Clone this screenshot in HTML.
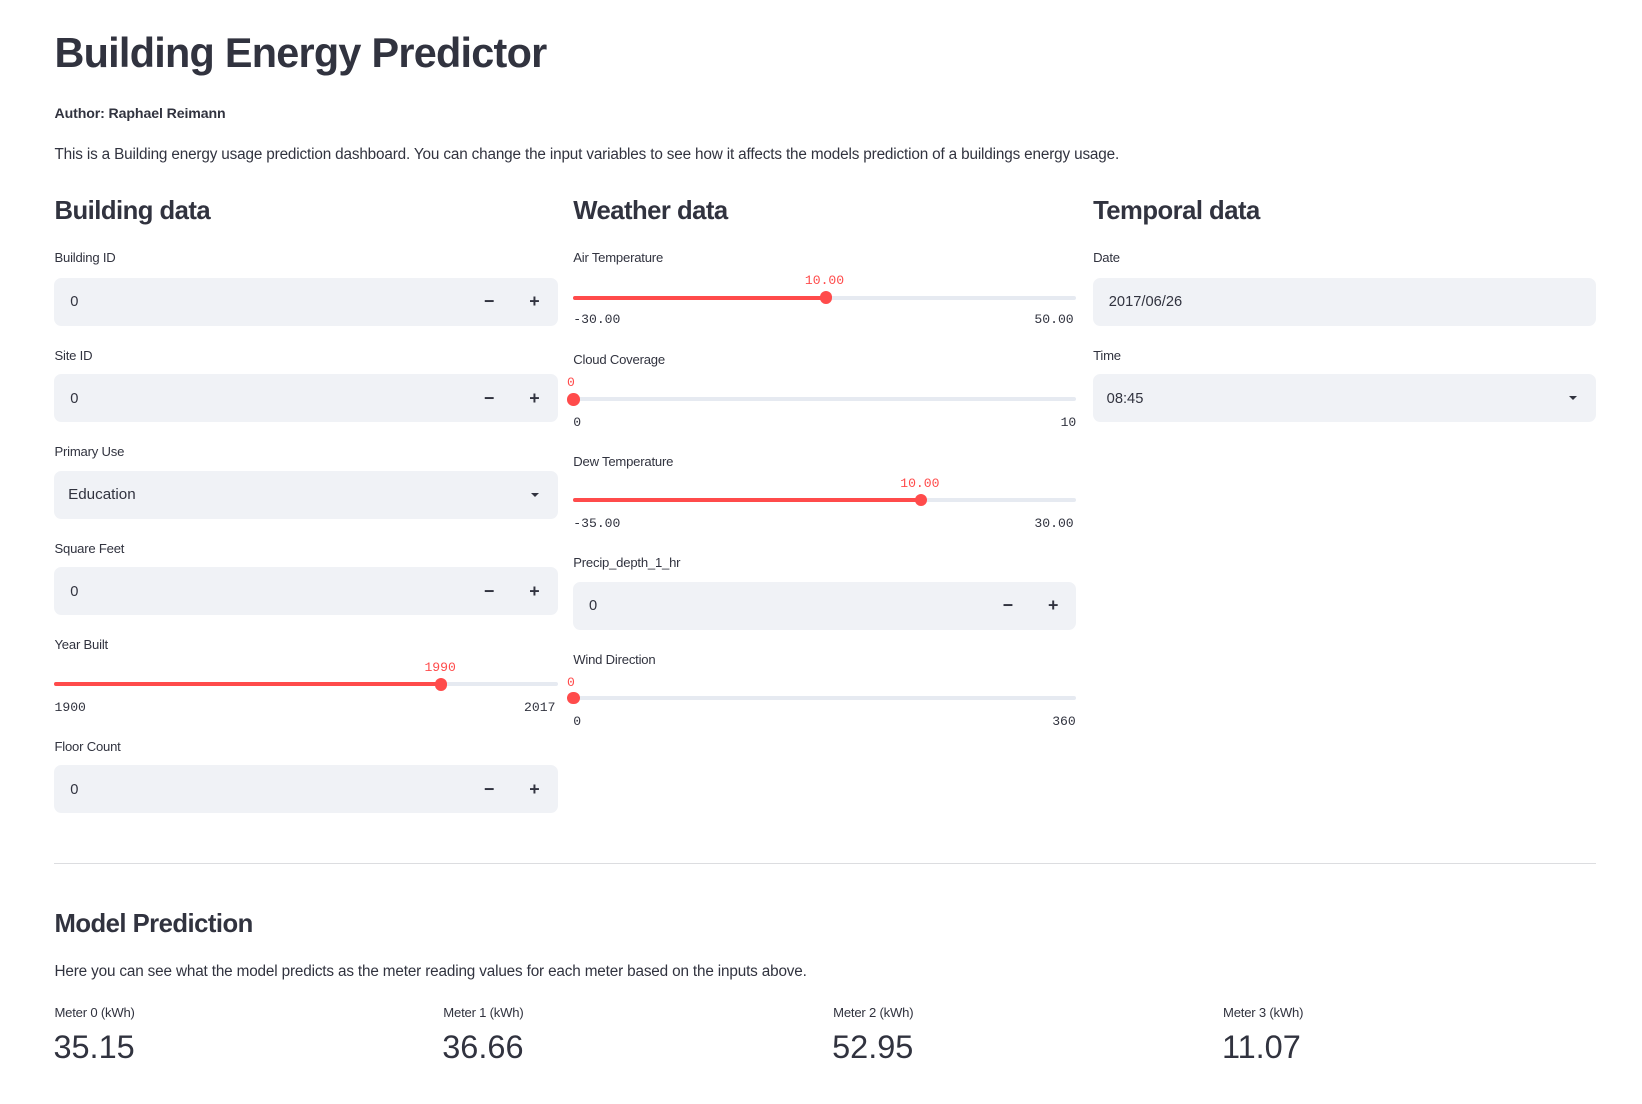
<!DOCTYPE html>
<html><head><meta charset="utf-8">
<style>
*{box-sizing:border-box;margin:0;padding:0}
html,body{background:#fff;width:1642px;height:1104px;overflow:hidden}
#w{position:relative;width:1567px;height:1054px;zoom:1.048;font-family:"Liberation Sans",Arial,sans-serif;color:#31333f}
.t{position:absolute;white-space:nowrap;line-height:20px;height:20px}
h1.t{font-size:39.5px;font-weight:bold;line-height:50px;height:50px;letter-spacing:-0.7px}
.h3{font-size:24.5px;font-weight:bold;line-height:32px;height:32px;letter-spacing:-0.5px}
.lab{font-size:12.5px;letter-spacing:-0.2px}
.box{position:absolute;background:#f0f2f6;border-radius:7px;height:46px}
.box .v{position:absolute;left:15px;top:14px;font-size:14px;line-height:20px}
.box .mi,.box .pl{position:absolute;top:13px;font-size:17px;font-weight:bold;line-height:20px}
.trk{position:absolute;height:4px;background:#e6eaf1;border-radius:2px}
.fill{position:absolute;left:0;top:0;height:4px;background:#ff4b4b;border-radius:2px}
.th{position:absolute;width:12px;height:12px;border-radius:6px;background:#ff4b4b;top:-4px}
.mono{font-family:"Liberation Mono",monospace;font-size:12.5px}
.red{color:#ff4b4b}
.caret{position:absolute;right:16px;top:21px;width:0;height:0;border-left:4px solid transparent;border-right:4px solid transparent;border-top:4px solid #31333f}
</style></head><body><div id="w">
<h1 class="t" style="left:52px;top:26px">Building Energy Predictor</h1>
<div class="t" style="left:52px;top:98px;font-size:13.5px;font-weight:bold;letter-spacing:-0.1px">Author: Raphael Reimann</div>
<div class="t" style="left:52px;top:138px;font-size:14.6px;letter-spacing:-0.15px">This is a Building energy usage prediction dashboard. You can change the input variables to see how it affects the models prediction of a buildings energy usage.</div>

<div class="t h3" style="left:52px;top:186px">Building data</div>
<div class="t h3" style="left:547px;top:186px">Weather data</div>
<div class="t h3" style="left:1043px;top:186px">Temporal data</div>

<!-- col1 -->
<div class="t lab" style="left:52px;top:237px">Building ID</div>
<div class="box" style="left:52px;top:265px;width:480px"><span class="v">0</span><span class="mi" style="left:410px">−</span><span class="pl" style="left:453px">+</span></div>
<div class="t lab" style="left:52px;top:330px">Site ID</div>
<div class="box" style="left:52px;top:357px;width:480px"><span class="v">0</span><span class="mi" style="left:410px">−</span><span class="pl" style="left:453px">+</span></div>
<div class="t lab" style="left:52px;top:422px">Primary Use</div>
<div class="box" style="left:52px;top:449px;width:480px"><span class="v" style="left:13px;font-size:14.5px">Education</span><span class="caret" style="right:18px"></span></div>
<div class="t lab" style="left:52px;top:514px">Square Feet</div>
<div class="box" style="left:52px;top:541px;width:480px"><span class="v">0</span><span class="mi" style="left:410px">−</span><span class="pl" style="left:453px">+</span></div>
<div class="t lab" style="left:52px;top:606px">Year Built</div>
<div class="t mono red" style="left:405px;top:628px">1990</div>
<div class="trk" style="left:52px;top:651px;width:480px"><div class="fill" style="width:369px"></div><div class="th" style="left:363px"></div></div>
<div class="t mono" style="left:52px;top:666px">1900</div>
<div class="t mono" style="left:500px;top:666px">2017</div>
<div class="t lab" style="left:52px;top:703px">Floor Count</div>
<div class="box" style="left:52px;top:730px;width:480px"><span class="v">0</span><span class="mi" style="left:410px">−</span><span class="pl" style="left:453px">+</span></div>

<!-- col2 -->
<div class="t lab" style="left:547px;top:237px">Air Temperature</div>
<div class="t mono red" style="left:768px;top:259px">10.00</div>
<div class="trk" style="left:547px;top:282px;width:480px"><div class="fill" style="width:241px"></div><div class="th" style="left:235px"></div></div>
<div class="t mono" style="left:547px;top:296px">-30.00</div>
<div class="t mono" style="left:987px;top:296px">50.00</div>
<div class="t lab" style="left:547px;top:334px">Cloud Coverage</div>
<div class="t mono red" style="left:541px;top:356px">0</div>
<div class="trk" style="left:547px;top:379px;width:480px"><div class="th" style="left:-6px"></div></div>
<div class="t mono" style="left:547px;top:394px">0</div>
<div class="t mono" style="left:1012px;top:394px">10</div>
<div class="t lab" style="left:547px;top:431px">Dew Temperature</div>
<div class="t mono red" style="left:859px;top:452px">10.00</div>
<div class="trk" style="left:547px;top:475px;width:480px"><div class="fill" style="width:332px"></div><div class="th" style="left:326px"></div></div>
<div class="t mono" style="left:547px;top:490px">-35.00</div>
<div class="t mono" style="left:987px;top:490px">30.00</div>
<div class="t lab" style="left:547px;top:528px">Precip_depth_1_hr</div>
<div class="box" style="left:547px;top:555px;width:480px"><span class="v">0</span><span class="mi" style="left:410px">−</span><span class="pl" style="left:453px">+</span></div>
<div class="t lab" style="left:547px;top:620px">Wind Direction</div>
<div class="t mono red" style="left:541px;top:642px">0</div>
<div class="trk" style="left:547px;top:664px;width:480px"><div class="th" style="left:-6px"></div></div>
<div class="t mono" style="left:547px;top:679px">0</div>
<div class="t mono" style="left:1004px;top:679px">360</div>

<!-- col3 -->
<div class="t lab" style="left:1043px;top:237px">Date</div>
<div class="box" style="left:1043px;top:265px;width:480px"><span class="v">2017/06/26</span></div>
<div class="t lab" style="left:1043px;top:330px">Time</div>
<div class="box" style="left:1043px;top:357px;width:480px"><span class="v" style="left:13px">08:45</span><span class="caret" style="right:18px"></span></div>

<div style="position:absolute;left:52px;top:823px;width:1471px;height:1px;background:#dcdde0"></div>
<div class="t h3" style="left:52px;top:866px">Model Prediction</div>
<div class="t" style="left:52px;top:918px;font-size:14.6px;letter-spacing:-0.15px">Here you can see what the model predicts as the meter reading values for each meter based on the inputs above.</div>
<div class="t lab" style="left:52px;top:957px">Meter 0 (kWh)</div>
<div class="t lab" style="left:423px;top:957px">Meter 1 (kWh)</div>
<div class="t lab" style="left:795px;top:957px">Meter 2 (kWh)</div>
<div class="t lab" style="left:1167px;top:957px">Meter 3 (kWh)</div>
<div class="t" style="left:51px;top:982px;font-size:31px;line-height:36px;height:36px">35.15</div>
<div class="t" style="left:422px;top:982px;font-size:31px;line-height:36px;height:36px">36.66</div>
<div class="t" style="left:794px;top:982px;font-size:31px;line-height:36px;height:36px">52.95</div>
<div class="t" style="left:1166px;top:982px;font-size:31px;line-height:36px;height:36px">11.07</div>
</div></body></html>
